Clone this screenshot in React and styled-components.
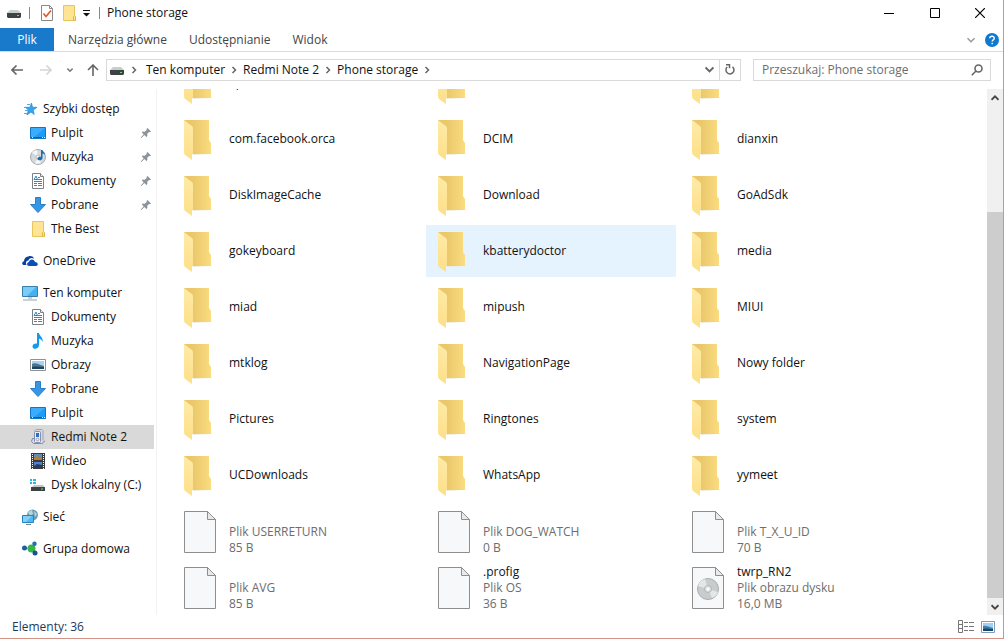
import React from "react";
import styled, { createGlobalStyle } from "styled-components";

const Global = createGlobalStyle`
  * { box-sizing: border-box; }
  body { margin: 0; background: #fff; color: #111; font: 12px/16px "Open Sans", "Noto Sans", sans-serif; }
  button, input { font: inherit; color: inherit; margin: 0; padding: 0; border: 0; background: none; outline: 0; }
  ul { list-style: none; margin: 0; padding: 0; }
  a { color: inherit; text-decoration: none; }
  svg { display: block; flex: none; }
`;

const Window = styled.div`
  display: flex;
  flex-direction: column;
  height: 100vh;
  border: solid #d39286;
  border-width: 0 1px 1px 0;
  overflow: hidden;
`;

const TitleBar = styled.header`
  display: flex;
  align-items: center;
  height: 28px;
  flex: none;
  padding: 0 0 2px 7px;
`;
const QuickTools = styled.div`
  display: flex;
  align-items: center;
`;
const IconButton = styled.button`
  display: flex;
  align-items: center;
  justify-content: center;
  width: ${(p) => p.$w || 24}px;
  height: ${(p) => p.$h || 24}px;
  flex: none;
`;
const Rule = styled.span`
  width: 1px;
  height: 12px;
  margin: 0 ${(p) => p.$after}px 0 ${(p) => p.$before}px;
  background: #888;
`;
const Title = styled.h1`
  margin: 0;
  font-size: 12px;
  font-weight: 400;
  flex: 1;
`;

const Tabs = styled.nav`
  display: flex;
  height: 24px;
  flex: none;
  border-bottom: 1px solid #dadbdc;
`;
const Tab = styled.button`
  padding: 0 8px 0 14px;
  color: #444;
`;
const FileTab = styled(Tab)`
  width: 54px;
  padding: 0;
  color: #fff;
  background: #1979ca;
`;
const TabTools = styled.div`
  display: flex;
  align-items: center;
  margin-left: auto;
  padding-right: 2px;
`;

const NavBar = styled.div`
  display: flex;
  align-items: center;
  flex: none;
  height: 37px;
  padding: 0 12px 2px 2px;
`;
const Address = styled.div`
  display: flex;
  align-items: center;
  flex: 1;
  height: 22px;
  margin-right: 12px;
  border: 1px solid #d9d9d9;
`;
const Crumb = styled.button`
  height: 20px;
  white-space: nowrap;
`;
const Crumbs = styled.div`
  display: flex;
  flex: 1;
  min-width: 0;
  padding-left: 5px;
  overflow: hidden;
`;
const RefreshCell = styled.div`
  display: flex;
  border-left: 1px solid #d9d9d9;
`;
const Search = styled.label`
  display: flex;
  align-items: center;
  width: 238px;
  height: 22px;
  padding: 0 7px 0 8px;
  border: 1px solid #d9d9d9;
`;
const SearchInput = styled.input`
  flex: 1;
  min-width: 0;
  &::placeholder { color: #6d6d6d; opacity: 1; }
`;

const Body = styled.div`
  display: flex;
  flex: 1;
  min-height: 0;
`;
const Sidebar = styled.nav`
  width: 157px;
  flex: none;
  padding: 8px 2px 0 0;
  border-right: 1px solid #f2f2f2;
  overflow: hidden;
`;
const Group = styled.ul`
  margin-bottom: 8px;
`;
const NavLink = styled.a`
  display: flex;
  align-items: center;
  gap: 5px;
  height: 24px;
  padding: 0 2px 0 ${(p) => (p.$root ? 22 : 30)}px;
  background: ${(p) => (p.$active ? "#d9d9d9" : "transparent")};
  white-space: nowrap;
`;
const NavText = styled.span`
  flex: 1;
`;

const Files = styled.main`
  flex: 1;
  min-width: 0;
  padding: 0 15px;
  overflow: hidden;
`;
const Grid = styled.ul`
  display: grid;
  grid-template-columns: repeat(auto-fill, 250px);
  gap: 4px;
`;
const FolderGrid = styled(Grid)`
  margin-top: -32px;
`;
const FileGrid = styled(Grid)`
  margin-top: 5px;
`;
const Item = styled.li`
  display: flex;
  align-items: center;
  height: 52px;
  padding-left: 12px;
  background: ${(p) => (p.$hover ? "#e5f3ff" : "transparent")};
`;
const ItemIcon = styled.span`
  width: 45px;
`;
const Line = styled.div`
  min-height: 16px;
  color: ${(p) => (p.$muted ? "#6d6d6d" : "#111")};
`;

const Scroll = styled.div`
  display: flex;
  flex-direction: column;
  width: 16px;
  flex: none;
  background: #f0f0f0;
`;
const Thumb = styled.div`
  flex: 386;
  background: #cdcdcd;
`;
const TrackSpace = styled.div`
  flex: 106;
`;

const Status = styled.footer`
  display: flex;
  align-items: center;
  height: 23px;
  flex: none;
  padding: 0 3px 0 12px;
  color: #1e395b;
`;
const Count = styled.span`
  flex: 1;
`;

const Chevron = ({ dir = "right", color = "#666", size = 8, w = 1.5 }) => (
  <svg width={size} height={size} viewBox="0 0 8 8" fill="none" stroke={color} strokeWidth={w}>
    <path d={{ right: "M2.5 1l3 3-3 3", down: "M.5 2.2L4 5.7l3.5-3.5", up: "M.5 5.8L4 2.3l3.5 3.5" }[dir]} />
  </svg>
);

const Drive = () => (
  <svg width="14" height="10" viewBox="0 0 14 10">
    <path d="M3 2h8l3 3H0z" fill="#c9cccd" />
    <path d="M0 5h14v4l-1 1H1L0 9z" fill="#3d4244" />
    <path d="M10 7h2v1h-2z" fill="#5be36c" />
  </svg>
);
const SmallFolder = () => (
  <svg width="16" height="16" viewBox="0 0 16 16">
    <path d="M2.500.5h11v10l1 1v4h-12z" fill="#ffe593" stroke="#e8c55d" />
    <path d="M12.500 15.500v-4l1-1 1 1v4z" fill="#ffe087" stroke="#dfb84a" />
  </svg>
);
const Desktop = () => (
  <svg width="16" height="16" viewBox="0 0 16 16">
    <path d="M.5 2.500h15v11H.5z" fill="#1e9bf5" stroke="#1676bd" />
    <path d="M1 3h14L4 12H1z" fill="#3cacff" />
    <path d="M1 12h14v1H1z" fill="#0d5f9e" />
    <path d="M2 12h1v1H2zm10 0h1v1h-1zm2 0h1v1h-1z" fill="#fff" />
  </svg>
);
const Disc = () => (
  <svg width="16" height="16" viewBox="0 0 16 16">
    <circle cx="8" cy="8" r="7.500" fill="#d5d9dc" stroke="#a4aaae" />
    <path d="M8 8L2 3.500A7 7 0 0 1 7 1zM8 8l3 6a7 7 0 0 1-6 .3z" fill="#f4f6f7" />
    <circle cx="8" cy="8" r="2" fill="#fff" stroke="#b0b5b8" />
    <path d="M11 1h1.500c0 2 3 2.500 2.500 5-.5-1-1.500-1.500-2.500-1.500V9c0 3-5 3-5 .8C7.500 8 9.500 7.500 11 8z" fill="#1c6fae" />
  </svg>
);
const Doc = () => (
  <svg width="16" height="16" viewBox="0 0 16 16">
    <path d="M2.500.5h8l3 3v12h-11z" fill="#fff" stroke="#7d8185" />
    <path d="M10.500.5v3h3" fill="#eee" stroke="#7d8185" />
    <path d="M4 6.500L6 3l1.500 3.500M8 4.500h2M4 6.500h8M4 8.500h8M4 10.500h3M8 10.500h4M4 12.500h3M8 12.500h4" fill="none" stroke="#278bcb" />
  </svg>
);
const Down = () => (
  <svg width="16" height="16" viewBox="0 0 16 16">
    <path d="M5.500.5h5v7h5L8 15.500.5 7.500h5z" fill="#3595e6" stroke="#2b7ec6" />
  </svg>
);
const Note = () => (
  <svg width="16" height="16" viewBox="0 0 16 16">
    <path d="M7 0h2c.3 3 4.600 4.300 3.500 9C12 7 10.500 6 9 5.700V12c0 4.500-6.500 5-6.500 1.500C2.500 11 5 10 7 10.500z" fill="#129af0" />
  </svg>
);
const Picture = () => (
  <svg width="16" height="16" viewBox="0 0 16 16">
    <path d="M.5 2.500h15v11H.5z" fill="#fff" stroke="#8c9298" />
    <path d="M2 4h12v8H2z" fill="#a9d3ef" />
    <path d="M2 7c4-2 7 1 12 2v3H2z" fill="#4e778b" />
    <path d="M2 10c5-1 8 0 12 0v2H2z" fill="#1d4560" />
  </svg>
);
const LargeIcons = () => (
  <svg width="14" height="12" viewBox="0 0 14 12">
    <path d="M.5.5h13v11H.5z" fill="#fff" stroke="#7f9db5" />
    <path d="M2 2h10v8H2z" fill="#9fd0f2" />
    <path d="M2 5c3-1 6 1 10 2v3H2z" fill="#3f7fb3" />
    <path d="M2 8c4-1 6 0 10 0v2H2z" fill="#1d4560" />
  </svg>
);
const Star = () => (
  <svg width="16" height="16" viewBox="0 0 16 16">
    <path d="M9.500 2l1 4.300H15l-3.800 2.700 1 4.500L9 11 5 14l1.300-5L3.500 6.300h4.500z" fill="#35a4ef" stroke="#2189d2" strokeWidth=".7" />
    <path d="M5 3.500h3M2 6.500h2M3 9.500h3M2 12.500h3" stroke="#42aef4" />
  </svg>
);
const Cloud = () => (
  <svg width="16" height="16" viewBox="0 0 16 16">
    <path d="M1.500 12C-.5 11.500 0 8.500 2 8.200 2 5.500 4 3.200 6.500 3.500 8 2.500 11 3 12 5.500 9 4 7 5.500 6.500 7.500 4 7.500 3.500 10 4.500 12z" fill="#0b419e" />
    <path d="M7 13c-2.500 0-2.500-4 0-4 .3-3.500 5.500-3.500 6 0C16.500 9 16.500 13 14 13z" fill="#0b4fb2" />
  </svg>
);
const Monitor = () => (
  <svg width="16" height="16" viewBox="0 0 16 16">
    <path d="M.5 1.500h15v10H.5z" fill="#43b2f2" stroke="#397faa" />
    <path d="M1 2h13L5 11H1z" fill="#79cbf8" />
    <path d="M6 13h4M1 15h14" stroke="#8ea4b2" />
  </svg>
);
const Phone = () => (
  <svg width="16" height="16" viewBox="0 0 16 16">
    <path d="M5 2.500V1.500l1-1h6l1 1V12" fill="none" stroke="#9aa3bd" />
    <path d="M5 9.500H2.500l-1 3 2 2h8c3 0 1-2.500 3.500-2.500" fill="#d9dce8" stroke="#8086a5" />
    <rect x="4.500" y="2.500" width="6" height="11" rx="1" fill="#e8ecf5" stroke="#8490b0" />
    <path d="M6 4h3v4H6z" fill="#2f6fc0" />
    <circle cx="7.500" cy="10.500" r="1.300" fill="#fff" stroke="#8d98b3" />
  </svg>
);
const Film = () => (
  <svg width="16" height="16" viewBox="0 0 16 16">
    <path d="M1 0h14v16H1z" fill="#3a3a3a" />
    <path d="M4 1h8v6H4z" fill="#6189bd" />
    <path d="M4 5l3-3 2 3 3-2v4H4z" fill="#b87c35" />
    <path d="M4 9h8v6H4z" fill="#4b83cd" />
    <path d="M4 13l3-2 5 1v3H4z" fill="#283c60" />
    <path d="M2.500 1v15M13.500 1v15" stroke="#fff" strokeDasharray="1 1" />
  </svg>
);
const LocalDisk = () => (
  <svg width="16" height="16" viewBox="0 0 16 16">
    <path d="M0 2h2v2H0zm3 0h3v2H3zM0 5h2v2H0zm3 0h3v2H3z" fill="#2eb5e8" />
    <path d="M4 8h9l2 3H1z" fill="#c1c6c8" />
    <path d="M1 10h14v4H1z" fill="#3d4244" />
    <path d="M11 11.500h2v1h-2z" fill="#65e778" />
  </svg>
);
const Network = () => (
  <svg width="16" height="16" viewBox="0 0 16 16">
    <circle cx="10.500" cy="6" r="5.500" fill="#6b9fb8" />
    <path d="M6 3l4-2 1 4-3 2zM12 2l3 3-2 3z" fill="#b8d7dd" />
    <path d="M.5 6.500h11v7H.5z" fill="#50b9f4" stroke="#2682bd" />
    <path d="M1 7h9l-6 6H1z" fill="#82d0f9" />
    <path d="M4 15.500h5" stroke="#72899a" />
  </svg>
);
const HomeGroup = () => (
  <svg width="16" height="16" viewBox="0 0 16 16">
    <path d="M3 7l7 1 3-5M10 8l3 5" fill="none" stroke="#8cb4cb" />
    <circle cx="9.500" cy="7.500" r="4" fill="#3bb44a" />
    <circle cx="2.500" cy="7" r="2.500" fill="#1e5fa9" />
    <circle cx="12.500" cy="2.800" r="2.200" fill="#1e6eb8" />
    <circle cx="13" cy="12" r="2.500" fill="#17538f" />
  </svg>
);
const Pin = () => (
  <svg width="12" height="12" viewBox="0 0 12 12">
    <path d="M7.500 1L11 4.500l-1 .8-1-.2-1.800 1.800.2 2-1 1L4.300 8 1.500 11l-.7-.6L3.700 7.300 1.800 5.500l1-1 2 .2 2-2-.2-1z" fill="#8d9399" />
  </svg>
);

const BigFolder = () => (
  <svg width="30" height="42" viewBox="0 0 30 42">
    <defs>
      <linearGradient id="back" x1="0" x2="1">
        <stop offset=".3" stopColor="#e9c76a" />
        <stop offset="1" stopColor="#fbdc80" />
      </linearGradient>
      <linearGradient id="flap" y1="0" y2="1" x2="0">
        <stop stopColor="#ffeaa8" />
        <stop offset="1" stopColor="#fddf87" />
      </linearGradient>
    </defs>
    <path d="M9 36l20-1-3 1-17 1z" fill="#efe9d8" />
    <path d="M0 2h25v20l2 3v11H9L0 32z" fill="url(#back)" />
    <path d="M0 2l8 6q1 1 1 2v25l-1 1v6l-7-5q-1-1-1-3z" fill="url(#flap)" />
  </svg>
);
const BigFile = ({ disc }) => (
  <svg width="32" height="42" viewBox="0 0 32 42">
    <path d="M.5.5h23l8 8v33H.5z" fill="#f7f8fa" stroke="#8e8e8e" />
    <path d="M23.500.5v8h8z" fill="#e9e9e9" stroke="#8e8e8e" />
    {disc && (
      <g>
        <circle cx="16" cy="22" r="10.500" fill="#c8cccc" stroke="#a9adad" />
        <path d="M16 22L6 19a10 10 0 0 1 7-7zM16 22l10 3a10 10 0 0 1-6 6z" fill="#e3e7e6" />
        <circle cx="16" cy="22" r="3.500" fill="#dfe2e2" stroke="#b2b5b5" />
        <circle cx="16" cy="22" r="1.500" fill="#fff" />
      </g>
    )}
  </svg>
);

const groups = [
  [
    ["Szybki dostęp", Star],
    ["Pulpit", Desktop, true],
    ["Muzyka", Disc, true],
    ["Dokumenty", Doc, true],
    ["Pobrane", Down, true],
    ["The Best", SmallFolder],
  ],
  [["OneDrive", Cloud]],
  [
    ["Ten komputer", Monitor],
    ["Dokumenty", Doc],
    ["Muzyka", Note],
    ["Obrazy", Picture],
    ["Pobrane", Down],
    ["Pulpit", Desktop],
    ["Redmi Note 2", Phone],
    ["Wideo", Film],
    ["Dysk lokalny (C:)", LocalDisk],
  ],
  [["Sieć", Network]],
  [["Grupa domowa", HomeGroup]],
];

const folders = [
  "apk", "", "",
  "com.facebook.orca", "DCIM", "dianxin",
  "DiskImageCache", "Download", "GoAdSdk",
  "gokeyboard", "kbatterydoctor", "media",
  "miad", "mipush", "MIUI",
  "mtklog", "NavigationPage", "Nowy folder",
  "Pictures", "Ringtones", "system",
  "UCDownloads", "WhatsApp", "yymeet",
];

const files = [
  ["", "Plik USERRETURN", "85 B"],
  ["", "Plik DOG_WATCH", "0 B"],
  ["", "Plik T_X_U_ID", "70 B"],
  ["", "Plik AVG", "85 B"],
  [".profig", "Plik OS", "36 B"],
  ["twrp_RN2", "Plik obrazu dysku", "16,0 MB"],
];

const path = ["Ten komputer", "Redmi Note 2", "Phone storage"];

export default function App() {
  return (
    <Window>
      <Global />
      <TitleBar>
        <QuickTools>
          <Drive />
          <Rule $before={8} $after={4} />
          <IconButton $w={26} aria-label="Właściwości">
            <svg width="12" height="16" viewBox="0 0 12 16">
              <path d="M.5.5h8l3 3v12H.5z" fill="#fff" stroke="#888" />
              <path d="M8.500.5v3h3" fill="none" stroke="#888" />
              <path d="M2.500 8.500l2.500 3 5-6" fill="none" stroke="#e2582d" strokeWidth="1.700" />
            </svg>
          </IconButton>
          <IconButton $w={18} aria-label="Nowy folder"><SmallFolder /></IconButton>
          <IconButton $w={17} aria-label="Dostosuj pasek">
            <svg width="7" height="7" viewBox="0 0 7 7"><path d="M0 0h7v1H0zM0 3h7L3.500 6.500z" fill="#111" /></svg>
          </IconButton>
          <Rule $before={4} $after={7} />
        </QuickTools>
        <Title>Phone storage</Title>
        <IconButton $w={46} aria-label="Minimalizuj">
          <svg width="10" height="10"><path d="M0 5.500h10" stroke="#000" /></svg>
        </IconButton>
        <IconButton $w={45} aria-label="Maksymalizuj">
          <svg width="10" height="10"><path d="M.5.5h9v9h-9z" fill="none" stroke="#000" /></svg>
        </IconButton>
        <IconButton $w={46} aria-label="Zamknij">
          <svg width="10" height="10"><path d="M0 0l10 10M10 0L0 10" stroke="#000" strokeWidth="1.200" /></svg>
        </IconButton>
      </TitleBar>
      <Tabs>
        <FileTab>Plik</FileTab>
        <Tab>Narzędzia główne</Tab>
        <Tab>Udostępnianie</Tab>
        <Tab>Widok</Tab>
        <TabTools>
          <IconButton $w={24} $h={22} aria-label="Rozwiń wstążkę"><Chevron dir="down" color="#999" /></IconButton>
          <IconButton $w={18} $h={22} aria-label="Pomoc">
            <svg width="14" height="14" viewBox="0 0 14 14">
              <circle cx="7" cy="7" r="7" fill="#0f78d0" />
              <path d="M4.800 5.300C4.800 2.500 9.300 2.500 9.300 5.200 9.300 6.800 7.200 6.900 7.200 8.500M7.200 9.700v1.500" fill="none" stroke="#fff" strokeWidth="1.400" />
            </svg>
          </IconButton>
        </TabTools>
      </Tabs>
      <NavBar>
        <IconButton $w={30} aria-label="Wstecz">
          <svg width="12" height="10" viewBox="0 0 12 10" fill="none" stroke="#666" strokeWidth="1.600"><path d="M12 5H1M5.500.5L1 5l4.500 4.500" /></svg>
        </IconButton>
        <IconButton $w={28} aria-label="Dalej">
          <svg width="12" height="10" viewBox="0 0 12 10" fill="none" stroke="#d5d5d5" strokeWidth="1.600"><path d="M0 5h11M6.500.5L11 5 6.500 9.500" /></svg>
        </IconButton>
        <IconButton $w={20} aria-label="Ostatnie lokalizacje"><Chevron dir="down" color="#777" size={6} w={2} /></IconButton>
        <IconButton $w={26} aria-label="W górę">
          <svg width="12" height="12" viewBox="0 0 12 12" fill="none" stroke="#666" strokeWidth="1.600"><path d="M6 12V1M1 6l5-5 5 5" /></svg>
        </IconButton>
        <Address>
          <IconButton $w={20} $h={20} aria-label="Lokalizacja"><Drive /></IconButton>
          <IconButton $w={14} $h={20} aria-label="Rozwiń"><Chevron /></IconButton>
          <Crumbs>
            {path.map((name) => (
              <React.Fragment key={name}>
                <Crumb>{name}</Crumb>
                <IconButton $w={18} $h={20} aria-label={"Rozwiń " + name}><Chevron /></IconButton>
              </React.Fragment>
            ))}
          </Crumbs>
          <IconButton $w={20} $h={20} aria-label="Poprzednie lokalizacje"><Chevron dir="down" size={9} w={1.7} /></IconButton>
          <RefreshCell>
            <IconButton $w={20} $h={20} aria-label="Odśwież">
              <svg width="10" height="11" viewBox="0 0 10 11" fill="none" stroke="#666" strokeWidth="1.500"><path d="M7.500 2.800A4 4 0 1 1 2.200 3M1 .8h3.500v3.500" /></svg>
            </IconButton>
          </RefreshCell>
        </Address>
        <Search>
          <SearchInput aria-label="Przeszukaj" placeholder="Przeszukaj: Phone storage" />
          <svg width="12" height="12" viewBox="0 0 12 12" fill="none" stroke="#666" strokeWidth="1.600"><circle cx="7.500" cy="4.500" r="3.500" /><path d="M5 7L.8 11.200" /></svg>
        </Search>
      </NavBar>
      <Body>
        <Sidebar>
          {groups.map((g, i) => (
            <Group key={i}>
              {g.map(([name, Icon, pinned], j) => (
                <li key={j}>
                  <NavLink href="#" $root={j === 0} $active={name === "Redmi Note 2"}>
                    <Icon />
                    <NavText>{name}</NavText>
                    {pinned && <Pin />}
                  </NavLink>
                </li>
              ))}
            </Group>
          ))}
        </Sidebar>
        <Files>
          <FolderGrid>
            {folders.map((name, i) => (
              <Item key={i} $hover={name === "kbatterydoctor"}>
                <ItemIcon><BigFolder /></ItemIcon>
                <Line>{name}</Line>
              </Item>
            ))}
          </FolderGrid>
          <FileGrid>
            {files.map(([name, kind, size], i) => (
              <Item key={i}>
                <ItemIcon><BigFile disc={name === "twrp_RN2"} /></ItemIcon>
                <div>
                  <Line>{name}</Line>
                  <Line $muted>{kind}</Line>
                  <Line $muted>{size}</Line>
                </div>
              </Item>
            ))}
          </FileGrid>
        </Files>
        <Scroll>
          <IconButton $w={16} $h={17} aria-label="Przewiń w górę"><Chevron dir="up" color="#444" w={1.8} /></IconButton>
          <TrackSpace />
          <Thumb />
          <IconButton $w={16} $h={17} aria-label="Przewiń w dół"><Chevron dir="down" color="#444" w={1.8} /></IconButton>
        </Scroll>
      </Body>
      <Status>
        <Count>Elementy: 36</Count>
        <IconButton $w={20} $h={20} aria-label="Szczegóły">
          <svg width="16" height="13" viewBox="0 0 16 13" fill="none" stroke="#777">
            <path d="M.5.500h4v12h-4zM.5 4.500h4M.5 8.500h4M6 2.500h4M11 2.500h5M6 6.500h4M11 6.500h5M6 10.500h4M11 10.500h5" />
          </svg>
        </IconButton>
        <IconButton $w={24} $h={20} aria-label="Duże ikony"><LargeIcons /></IconButton>
      </Status>
    </Window>
  );
}
